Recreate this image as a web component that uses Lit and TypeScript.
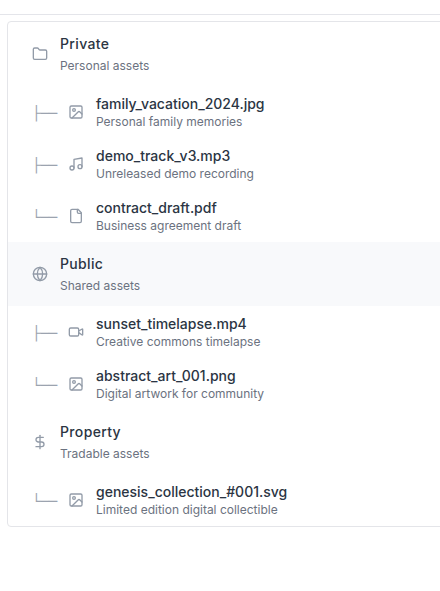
import { LitElement, html, css, svg } from "lit";
import { customElement } from "lit/decorators.js";

const image = svg`<rect x="3" y="3" width="18" height="18" rx="2"/><circle cx="9" cy="9" r="2"/><path d="m21 15-3.086-3.086a2 2 0 0 0-2.828 0L6 21"/>`;
const icons: Record<string, unknown> = {
  folder: svg`<path d="M20 20a2 2 0 0 0 2-2V8a2 2 0 0 0-2-2h-7.9a2 2 0 0 1-1.69-.9L9.6 3.9A2 2 0 0 0 7.93 3H4a2 2 0 0 0-2 2v13a2 2 0 0 0 2 2Z"/>`,
  image,
  music: svg`<path d="M9 18V5l12-2v13"/><circle cx="6" cy="18" r="3"/><circle cx="18" cy="16" r="3"/>`,
  file: svg`<path d="M15 2H6a2 2 0 0 0-2 2v16a2 2 0 0 0 2 2h12a2 2 0 0 0 2-2V7Z"/><path d="M14 2v4a2 2 0 0 0 2 2h4"/>`,
  globe: svg`<circle cx="12" cy="12" r="10"/><path d="M12 2a14.5 14.5 0 0 0 0 20 14.5 14.5 0 0 0 0-20"/><path d="M2 12h20"/>`,
  video: svg`<path d="m16 13 5.223 3.482a.5.5 0 0 0 .777-.416V7.87a.5.5 0 0 0-.752-.432L16 10.5"/><rect x="2" y="6" width="14" height="12" rx="2"/>`,
  dollar: svg`<path d="M12 2v20"/><path d="M17 5H9.5a3.5 3.5 0 0 0 0 7h5a3.5 3.5 0 0 1 0 7H6"/>`,
};

const groups = [
  { name: "Private", note: "Personal assets", icon: "folder", files: [
    ["family_vacation_2024.jpg", "Personal family memories", "image"],
    ["demo_track_v3.mp3", "Unreleased demo recording", "music"],
    ["contract_draft.pdf", "Business agreement draft", "file"],
  ] },
  { name: "Public", note: "Shared assets", icon: "globe", active: true, files: [
    ["sunset_timelapse.mp4", "Creative commons timelapse", "video"],
    ["abstract_art_001.png", "Digital artwork for community", "image"],
  ] },
  { name: "Property", note: "Tradable assets", icon: "dollar", files: [
    ["genesis_collection_#001.svg", "Limited edition digital collectible", "image"],
  ] },
];

@customElement("app-root")
export class AppRoot extends LitElement {
  static styles = css`
    :host { display: block; height: 591px; overflow: hidden; background: #fff; font-family: Inter, sans-serif; color: #2b3543; -webkit-font-smoothing: antialiased; }
    .bar { height: 14px; border-bottom: 1px solid #e4e5ea; }
    .panel { margin: 6px -10px 0 7px; border: 1px solid #e4e5e9; border-radius: 4px; overflow: hidden; }
    .group { display: flex; align-items: center; gap: 12px; height: 64px; padding-left: 24px; }
    .active { background: #f8f9fb; }
    .icon { width: 16px; height: 16px; flex: none; fill: none; stroke: #929ba8; stroke-width: 2; stroke-linecap: round; stroke-linejoin: round; }
    .name { font-size: 14px; line-height: 20px; font-weight: 500; letter-spacing: 0.35px; }
    .note { font-size: 12px; line-height: 16px; color: #6b7280; }
    .group .note { margin-top: 4px; }
    .file { display: flex; align-items: center; height: 52px; padding-left: 24px; }
    .file .name { line-height: 17.5px; letter-spacing: 0; }
    .file .note { margin-top: 1.5px; }
    .branch { width: 24px; margin-right: 12px; padding-top: 2px; flex: none; white-space: pre; font: 14px/20px "DejaVu Sans Mono", monospace; color: #9ca3af; }
    .file .icon { margin-right: 12px; }
  `;

  icon(name: string) {
    return html`<svg class="icon" viewBox="0 0 24 24">${icons[name]}</svg>`;
  }

  render() {
    return html`<div class="bar"></div>
      <div class="panel">
        ${groups.map((g) => html`
          <div class="group ${g.active ? "active" : ""}">
            ${this.icon(g.icon)}
            <div><div class="name">${g.name}</div><div class="note">${g.note}</div></div>
          </div>
          ${g.files.map((f, i) => html`
            <div class="file">
              <span class="branch">${i === g.files.length - 1 ? "└──" : "├──"}</span>
              ${this.icon(f[2])}
              <div><div class="name">${f[0]}</div><div class="note">${f[1]}</div></div>
            </div>`)}
        `)}
      </div>`;
  }
}
